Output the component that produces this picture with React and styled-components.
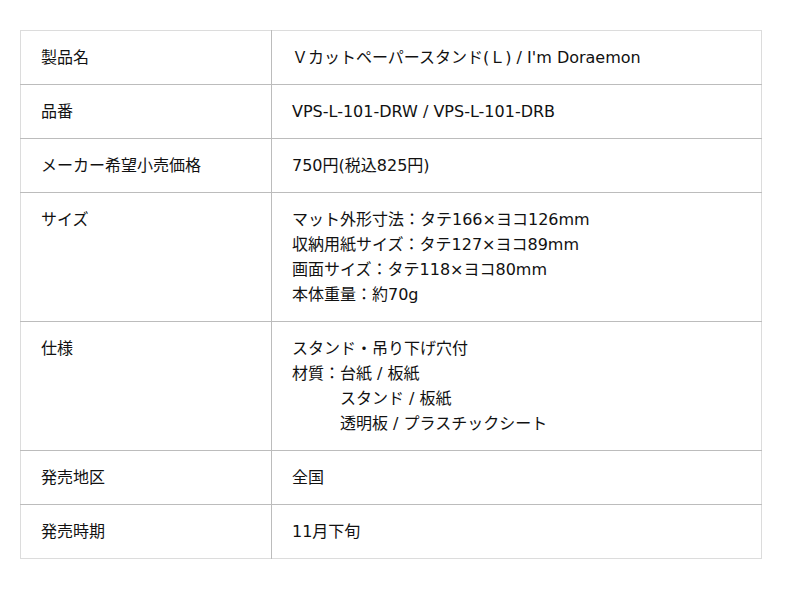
import React from "react";
import styled, { createGlobalStyle } from "styled-components";

const Global = createGlobalStyle`
  html, body { margin: 0; padding: 0; background: #fff; }
  body { font-family: "DejaVu Sans", "Noto Sans CJK JP", sans-serif; color: #111; }
`;

const Page = styled.div`
  padding: 30px 39px 30px 20px;
`;

const Table = styled.table`
  width: 742px;
  border-collapse: collapse;
  border: 1px solid #dcdcdc;
  font-size: 16px;
  line-height: 25px;
`;

const Row = styled.tr`
  &:not(:last-child) > td {
    border-bottom: 1px solid #bcbcbc;
  }
`;

const Label = styled.td`
  width: 210px;
  padding: 14px 20px 14px 20px;
  vertical-align: top;
  border-right: 1px solid #bcbcbc;
`;

const Value = styled.td`
  padding: 14px 20px 14px 20px;
  vertical-align: top;
`;

const Line = styled.div`
  padding-left: ${(p) => (p.$indent ? "48px" : "0")};
`;

const rows = [
  ["製品名", ["Ｖカットペーパースタンド(Ｌ) / I'm Doraemon"]],
  ["品番", ["VPS-L-101-DRW / VPS-L-101-DRB"]],
  ["メーカー希望小売価格", ["750円(税込825円)"]],
  [
    "サイズ",
    [
      "マット外形寸法：タテ166×ヨコ126mm",
      "収納用紙サイズ：タテ127×ヨコ89mm",
      "画面サイズ：タテ118×ヨコ80mm",
      "本体重量：約70g",
    ],
  ],
  [
    "仕様",
    [
      "スタンド・吊り下げ穴付",
      "材質：台紙 / 板紙",
      { t: "スタンド / 板紙", indent: true },
      { t: "透明板 / プラスチックシート", indent: true },
    ],
  ],
  ["発売地区", ["全国"]],
  ["発売時期", ["11月下旬"]],
];

export default function App() {
  return (
    <>
      <Global />
      <Page>
        <Table>
          <tbody>
            {rows.map(([label, lines]) => (
              <Row key={label}>
                <Label>{label}</Label>
                <Value>
                  {lines.map((l, i) =>
                    typeof l === "string" ? (
                      <Line key={i}>{l}</Line>
                    ) : (
                      <Line key={i} $indent={l.indent}>
                        {l.t}
                      </Line>
                    )
                  )}
                </Value>
              </Row>
            ))}
          </tbody>
        </Table>
      </Page>
    </>
  );
}
